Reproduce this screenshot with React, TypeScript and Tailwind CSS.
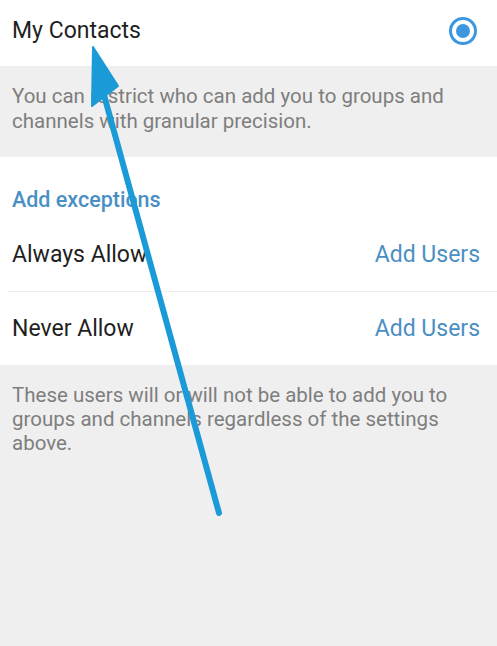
import React from "react"

const font = { fontFamily: "Roboto, 'Noto Sans', sans-serif" }

function Radio() {
  return (
    <svg width="30" height="30" viewBox="0 0 30 30">
      <circle cx="15" cy="15" r="12.5" fill="none" stroke="#3d97e0" strokeWidth="3" />
      <circle cx="15" cy="15" r="7" fill="#3d97e0" />
    </svg>
  )
}

function Arrow() {
  return (
    <svg className="absolute inset-0 pointer-events-none" width="497" height="646" viewBox="0 0 497 646">
      <line x1="104" y1="95" x2="219" y2="513" stroke="#1b9ad8" strokeWidth="6" strokeLinecap="round" />
      <polygon points="93,47 92,106 118,86" fill="#1b9ad8" strokeLinejoin="round" stroke="#1b9ad8" strokeWidth="2" />
    </svg>
  )
}

export default function App() {
  return (
    <div className="relative w-[497px] h-[646px] bg-[#efefef] overflow-hidden" style={font}>
      <div className="bg-white h-[66px] flex items-center justify-between pl-3 pr-[19px] pb-1">
        <span className="text-[23px] text-[#1f1f1f]">My Contacts</span>
        <Radio />
      </div>

      <div className="pt-[18px] pb-[23px] px-3 text-[20.5px] leading-[25px] text-[#7e7e7e]">
        You can restrict who can add you to groups and channels with granular precision.
      </div>

      <div className="bg-white">
        <div className="pt-[29px] pb-[5px] px-3 text-[21.5px] leading-[27px] font-medium text-[#4a8fc3]">
          Add exceptions
        </div>
        <div className="h-[73px] flex items-center justify-between px-3 pt-[2px]">
          <span className="text-[23px] text-[#1f1f1f]">Always Allow</span>
          <span className="text-[23px] text-[#4a8fc3] pr-[5px]">Add Users</span>
        </div>
        <div className="ml-2 h-px bg-[#ececec]" />
        <div className="h-[73px] flex items-center justify-between px-3 pt-[2px]">
          <span className="text-[23px] text-[#1f1f1f]">Never Allow</span>
          <span className="text-[23px] text-[#4a8fc3] pr-[5px]">Add Users</span>
        </div>
      </div>

      <div className="pt-[18px] px-3 text-[20.5px] leading-[24px] text-[#7e7e7e]">
        These users will or will not be able to add you to groups and channels regardless of the settings above.
      </div>

      <Arrow />
    </div>
  )
}
